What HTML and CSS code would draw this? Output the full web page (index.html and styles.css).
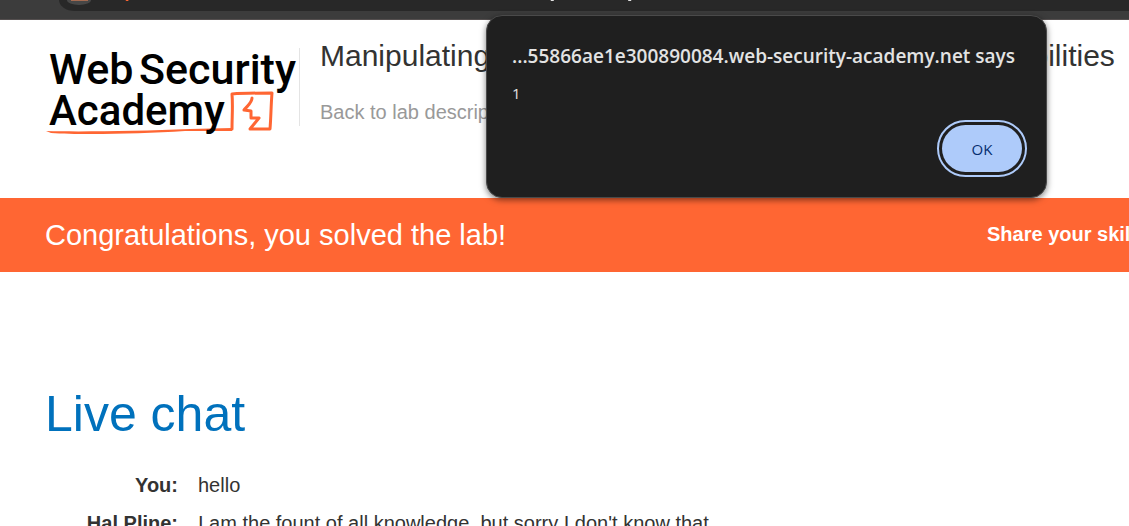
FILE: index.html
```html
<!DOCTYPE html>
<html lang="en">
<head>
<meta charset="utf-8">
<title>Manipulating WebSocket messages to exploit vulnerabilities</title>
<link rel="stylesheet" href="styles.css">
</head>
<body>
<div class="toolbar">
  <div class="address-bar">
    <span class="site-badge"></span>
    <svg class="address-trace" viewBox="0 0 1064 3" preserveAspectRatio="xMinYMin slice" aria-hidden="true">
      <path d="M66 0h3v1h-2z" fill="#ff6633"/>
      <path d="M489 0h3v1h-3zM566 0h3v1h-3z" fill="#e3e3e3"/>
    </svg>
  </div>
</div>

<header class="lab-header">
  <a class="logo" href="#" aria-label="Web Security Academy">
    <svg viewBox="0 0 255 92" width="255" height="92">
      <path d="M1 86 C35 87 95 86 145 84 L187 83 V86 L140 86 C95 89 35 90 6 88 Z" class="logo-underline"/>
      <path d="M187 84 C187 72 188 60 187 49 C200 48 213 48 227 48 C226 60 226 72 225 84 L205 84 L214 73 L206 73 L206 66 L199 65 C202 61 207 58 207 53" class="logo-line"/>
      <text class="logo-text logo-text-large" x="4" y="39">Web</text>
      <text class="logo-text logo-text-large" x="94" y="39">Security</text>
      <text class="logo-text" x="4" y="80">Academy</text>
    </svg>
  </a>
  <div class="lab-title">
    <h2 class="lab-name">Manipulating WebSocket messages to exploit vulnerabilities</h2>
    <a class="back-link" href="#">Back to lab description</a>
  </div>
</header>

<section class="solved-banner">
  <h4 class="solved-text">Congratulations, you solved the lab!</h4>
  <a class="share-link" href="#">Share your skills!</a>
</section>

<main class="chat">
  <h1 class="chat-title">Live chat</h1>
  <table class="chat-log">
    <tr><th scope="row">You:</th><td>hello</td></tr>
    <tr><th scope="row">Hal Pline:</th><td>I am the fount of all knowledge, but sorry I don't know that</td></tr>
  </table>
</main>

<dialog class="alert" open aria-labelledby="alert-title">
  <h2 class="alert-title" id="alert-title">...55866ae1e300890084.web-security-academy.net says</h2>
  <p class="alert-message">1</p>
  <form class="alert-actions" method="dialog">
    <button class="ok-button">OK</button>
  </form>
</dialog>
</body>
</html>
```

FILE: styles.css
```css
* { box-sizing: border-box; }
html { height: 100%; overflow: hidden; }
body {
  margin: 0;
  height: 100%;
  overflow: hidden;
  background: #fff;
  color: #333332;
  font: 20px/24px "Liberation Sans", Arial, sans-serif;
}
h1, h2, h4, p { margin: 0; font-weight: 400; }
a { color: inherit; text-decoration: none; }

.toolbar {
  height: 20px;
  padding-left: 59px;
  background: #3c3c3c;
  border-bottom: 1px solid #544f4f;
}
.address-bar {
  display: flex;
  height: 11px;
  padding-left: 8px;
  overflow: hidden;
  background: #282828;
  border-bottom-left-radius: 20px 14px;
}
.site-badge {
  flex: none;
  width: 24px;
  height: 5px;
  background: linear-gradient(#a56b51, #a56b51) center top / 17px 1px no-repeat #474747;
  border-radius: 0 0 12px 12px / 0 0 5px 5px;
}
.address-trace { flex: 1; height: 3px; margin-left: -32px; }

.lab-header {
  display: flex;
  align-items: flex-start;
  gap: 20px;
  padding: 20px 0 56px 45px;
}
.logo {
  flex: none;
  padding-top: 5px;
  height: 102px;
  background: linear-gradient(#e4e4e4, #e4e4e4) right 8px / 1px 78px no-repeat;
  border: 0;
}
.logo svg { display: block; }
.logo-text {
  font: 500 42px Roboto, sans-serif;
  fill: #000;
}
.logo-text-large { font-size: 43px; }
.logo-line { fill: none; stroke: #ff6633; stroke-width: 3; stroke-linejoin: round; stroke-linecap: round; }
.logo-underline { fill: #ff6633; }
.lab-title { white-space: nowrap; }
.lab-name { font-size: 30px; line-height: 32px; }
.back-link { display: block; margin-top: 28px; color: #999; }

.solved-banner {
  display: flex;
  align-items: center;
  justify-content: space-between;
  height: 74px;
  padding-left: 45px;
  background: #ff6633;
  color: #fff;
  white-space: nowrap;
}
.solved-text { font-size: 29px; line-height: 36px; }
.share-link { flex: none; width: 142px; padding-bottom: 2px; font-weight: 700; }

.chat { padding: 112px 45px 0; }
.chat-title { font-size: 50px; line-height: 60px; color: #0071bc; }
.chat-log { margin-top: 22px; border-collapse: collapse; }
.chat-log th { width: 143px; padding: 7px 10px 7px 0; text-align: right; white-space: nowrap; }
.chat-log td { padding: 7px 10px; white-space: nowrap; }

.alert {
  position: absolute;
  top: 15px;
  left: 486px;
  width: 561px;
  margin: 0;
  padding: 25px 20px 20px 25px;
  border: 1px solid #4a4a4a;
  border-radius: 16px;
  background: #1f1f1f;
  color: #e3e3e3;
  box-shadow: 0 2px 6px rgba(0, 0, 0, 0.5);
  font-family: "Open Sans", "Noto Sans", sans-serif;
}
.alert-title { font-size: 19px; line-height: 30px; font-weight: 600; white-space: nowrap; }
.alert-message { margin-top: 11px; font-size: 15px; line-height: 22px; }
.alert-actions { display: flex; justify-content: flex-end; margin-top: 19px; }
.ok-button {
  width: 80px;
  height: 47px;
  margin: 2px 4px 5px;
  border: 0;
  border-radius: 24px;
  background: #aecbfa;
  color: #062e6f;
  font: 500 15px "Open Sans", "Noto Sans", sans-serif;
  outline: 2px solid #aecbfa;
  outline-offset: 3px;
}
```
